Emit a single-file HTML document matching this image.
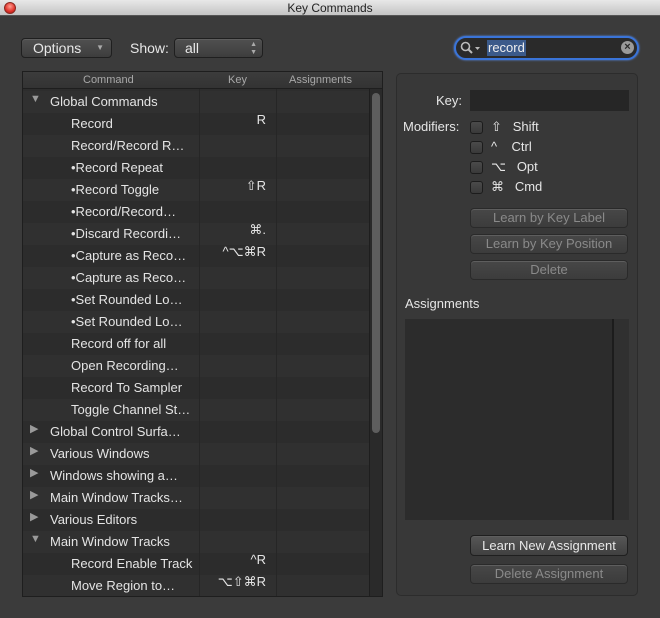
<!DOCTYPE html>
<html><head><style>
*{margin:0;padding:0;box-sizing:border-box}
body{width:660px;height:618px;background:#3b3b3b;font-family:"Liberation Sans","DejaVu Sans",sans-serif;position:relative;overflow:hidden;color:#e6e6e6;font-size:13px}
.abs{position:absolute}
.title{left:0;top:0;width:660px;height:16px;background:linear-gradient(#e8e8e8,#c4c4c4);border-bottom:1px solid #555;text-align:center;font-size:12px;color:#222;line-height:16px}
.close{left:4px;top:2px;width:12px;height:12px;border-radius:50%;background:radial-gradient(circle at 50% 35%,#ff9d8f,#e0322a 60%,#a31a14);border:1px solid #8a2a22}
.btn{border:1px solid #1f1f1f;border-radius:4px;background:linear-gradient(#505050,#3d3d3d);color:#e8e8e8;font-size:13px;line-height:18px;box-shadow:inset 0 1px 0 #5e5e5e}
.dis{color:#8a8a8a;background:linear-gradient(#474747,#3c3c3c);border-color:#2a2a2a;text-align:center}
.table{left:22px;top:71px;width:361px;height:526px;background:#2d2d2d;border:1px solid #1e1e1e;overflow:hidden}
.hdr{left:0;top:0;width:359px;height:17px;background:linear-gradient(#3c3c3c,#333);border-bottom:1px solid #1e1e1e;font-size:11px;color:#a8a8a8;line-height:16px}
.row{position:absolute;left:0;width:346px;height:22px;line-height:22px;font-size:13px;color:#e4e4e4;white-space:nowrap}
.k{position:absolute;right:103px;top:-4px}
.tri{position:absolute;left:7px;top:-3px;font-size:11px;color:#9a9a9a}
.cb{width:13px;height:13px;border:1px solid #1c1c1c;border-radius:3px;background:linear-gradient(#4a4a4a,#3a3a3a)}
</style></head><body>
<div class="abs title">Key Commands</div>
<div class="abs close"></div>

<div class="abs btn" style="left:21px;top:38px;width:91px;height:20px;padding-left:11px;font-size:14px">Options<span style="position:absolute;right:7px;top:0;font-size:8px;color:#aaa">▼</span></div>
<div class="abs" style="left:130px;top:39px;line-height:18px;font-size:14px">Show:</div>
<div class="abs btn" style="left:174px;top:38px;width:89px;height:20px;padding-left:10px;font-size:14px">all<span style="position:absolute;right:5px;top:-1px;font-size:7px;line-height:8px;color:#aaa;padding-top:3px">▲<br>▼</span></div>

<div class="abs" style="left:454px;top:36px;width:185px;height:24px;border:2px solid #3a74d8;border-radius:12px;background:#2a2a2a;box-shadow:0 0 2px #5a8ff0"></div>
<svg class="abs" style="left:460px;top:41px" width="24" height="14"><circle cx="5.5" cy="5.5" r="4" fill="none" stroke="#bbb" stroke-width="1.6"/><line x1="8.5" y1="8.5" x2="12" y2="12" stroke="#bbb" stroke-width="2"/><path d="M15 6h5l-2.5 3z" fill="#bbb"/></svg>
<div class="abs" style="left:487px;top:40px;height:16px;background:#3b5a8a;color:#eee;line-height:16px;padding:0 1px">record</div>
<div class="abs" style="left:621px;top:41px;width:13px;height:13px;border-radius:50%;background:#9a9a9a;color:#2a2a2a;font-size:11px;line-height:13px;text-align:center;font-weight:bold">×</div>

<div class="abs table">
 <div class="abs hdr"><span class="abs" style="left:60px">Command</span><span class="abs" style="left:205px">Key</span><span class="abs" style="left:266px">Assignments</span></div>
 <div id="rows"></div>
 <div class="abs" style="left:176px;top:17px;width:1px;height:510px;background:#262626"></div>
 <div class="abs" style="left:253px;top:17px;width:1px;height:510px;background:#262626"></div>
 <div class="abs" style="left:346px;top:17px;width:14px;height:510px;background:#2a2a2a;border-left:1px solid #1e1e1e"></div>
 <div class="abs" style="left:349px;top:21px;width:8px;height:340px;border-radius:4px;background:#5e5e5e"></div>
</div>

<div class="abs" style="left:396px;top:73px;width:242px;height:523px;border:1px solid #2c2c2c;border-radius:5px;background:#383838"></div>
<div class="abs" style="left:436px;top:93px">Key:</div>
<div class="abs" style="left:470px;top:90px;width:159px;height:21px;background:#262626"></div>
<div class="abs" style="left:403px;top:119px">Modifiers:</div>
<div class="abs cb" style="left:470px;top:121px"></div><div class="abs" style="left:491px;top:119px">⇧&nbsp;&nbsp; Shift</div>
<div class="abs cb" style="left:470px;top:141px"></div><div class="abs" style="left:491px;top:139px">^&nbsp;&nbsp;&nbsp; Ctrl</div>
<div class="abs cb" style="left:470px;top:161px"></div><div class="abs" style="left:491px;top:159px">⌥&nbsp;&nbsp; Opt</div>
<div class="abs cb" style="left:470px;top:181px"></div><div class="abs" style="left:491px;top:179px">⌘&nbsp;&nbsp; Cmd</div>
<div class="abs btn dis" style="left:470px;top:208px;width:158px;height:20px">Learn by Key Label</div>
<div class="abs btn dis" style="left:470px;top:234px;width:158px;height:20px">Learn by Key Position</div>
<div class="abs btn dis" style="left:470px;top:260px;width:158px;height:20px">Delete</div>
<div class="abs" style="left:405px;top:296px">Assignments</div>
<div class="abs" style="left:405px;top:319px;width:224px;height:201px;background:#2c2c2c"></div>
<div class="abs" style="left:612px;top:319px;width:2px;height:201px;background:#1c1c1c"></div>
<div class="abs" style="left:614px;top:319px;width:15px;height:201px;background:#303030"></div>
<div class="abs btn" style="left:470px;top:535px;width:158px;height:21px;text-align:center;line-height:19px;background:linear-gradient(#575757,#404040)">Learn New Assignment</div>
<div class="abs btn dis" style="left:470px;top:564px;width:158px;height:20px">Delete Assignment</div>

<script>
var r=[["▼","Global Commands",""],["","Record","R"],["","Record/Record R…",""],["","•Record Repeat",""],["","•Record Toggle","⇧R"],["","•Record/Record…",""],["","•Discard Recordi…","⌘."],["","•Capture as Reco…","^⌥⌘R"],["","•Capture as Reco…",""],["","•Set Rounded Lo…",""],["","•Set Rounded Lo…",""],["","Record off for all",""],["","Open Recording…",""],["","Record To Sampler",""],["","Toggle Channel St…",""],["▶","Global Control Surfa…",""],["▶","Various Windows",""],["▶","Windows showing a…",""],["▶","Main Window Tracks…",""],["▶","Various Editors",""],["▼","Main Window Tracks",""],["","Record Enable Track","^R"],["","Move Region to…","⌥⇧⌘R"]];
var h="";r.forEach(function(x,i){var top=19+i*22;var bg=i%2?"#2c2c2c":"#303030";var left=x[0]?27:48;
h+='<div class="row" style="top:'+top+'px;background:'+bg+'">'+(x[0]?'<span class="tri">'+x[0]+'</span>':'')+'<span style="position:absolute;left:'+left+'px">'+x[1]+'</span>'+(x[2]?'<span class="k">'+x[2]+'</span>':'')+'</div>';});
document.getElementById("rows").innerHTML=h;
</script>
</body></html>
